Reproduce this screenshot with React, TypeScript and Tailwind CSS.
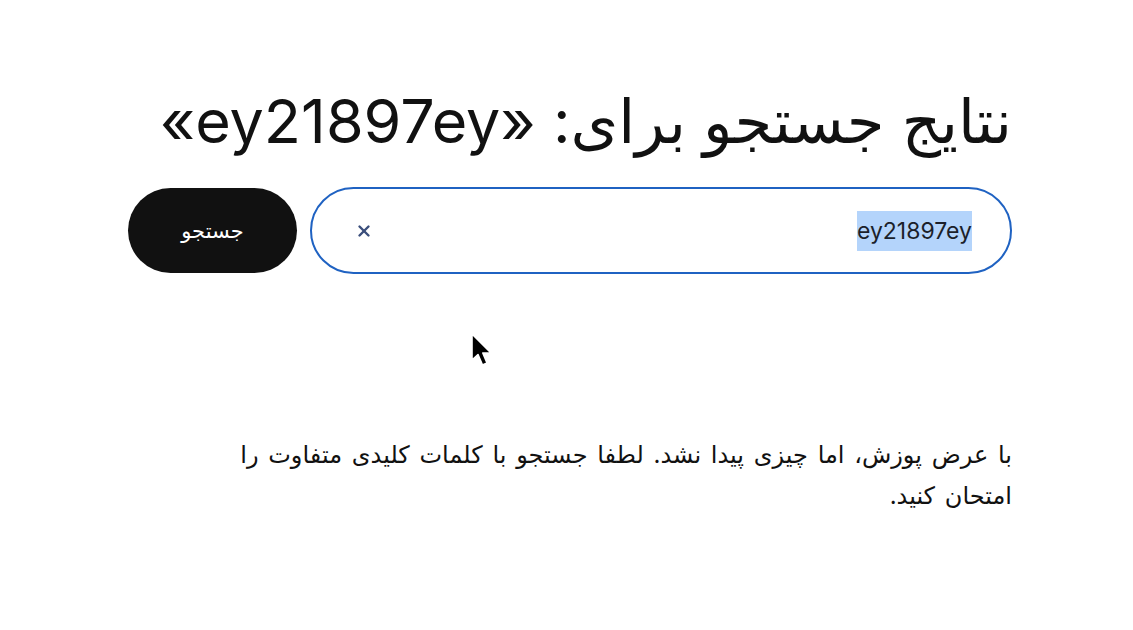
import { X } from 'lucide-react';

const font = '"Inter", "DejaVu Sans", "Noto Sans", sans-serif';

function Cursor() {
  return (
    <svg
      className="absolute left-[470px] top-[332px]"
      width="26"
      height="40"
      viewBox="0 0 26 40"
      aria-hidden
    >
      <path
        d="M2 2 L2 28 L8 22.5 L12.5 33 L17 31 L12.8 21 L21 21 Z"
        fill="#000"
        stroke="#fff"
        strokeWidth="1.6"
        strokeLinejoin="round"
      />
    </svg>
  );
}

export default function App() {
  return (
    <div
      dir="rtl"
      className="relative min-h-[630px] w-full bg-white text-[#111]"
      style={{ fontFamily: font }}
    >
      <div className="mr-[121px] w-[884px] pt-[89px]">
        <h1 className="text-[61px] leading-[64px] font-normal">
          نتایج جستجو برای: «ey21897ey»
        </h1>

        <div className="mt-[34px] flex items-center gap-[13px]">
          <div className="flex h-[87px] flex-1 items-center rounded-full border-2 border-[#1f62c2] pr-[38px] pl-[38px]">
            <span className="bg-[#b4d4fb] text-[23px] leading-[40px] text-[#1b1f2a]">
              ey21897ey
            </span>
            <button
              type="button"
              aria-label="پاک کردن"
              className="mr-auto ml-[2px] flex h-6 w-6 items-center justify-center text-[#3b4f7c]"
            >
              <X className="h-[18px] w-[18px]" strokeWidth={3.2} />
            </button>
          </div>
          <button
            type="button"
            className="h-[85px] w-[169px] shrink-0 rounded-full bg-[#111] text-[21px] font-normal text-white"
          >
            جستجو
          </button>
        </div>

        <p className="mt-[160px] w-[800px] text-[24px] leading-[41px] [word-spacing:3px]">
          با عرض پوزش، اما چیزی پیدا نشد. لطفا جستجو با کلمات کلیدی متفاوت را امتحان کنید.
        </p>
      </div>
      <Cursor />
    </div>
  );
}
